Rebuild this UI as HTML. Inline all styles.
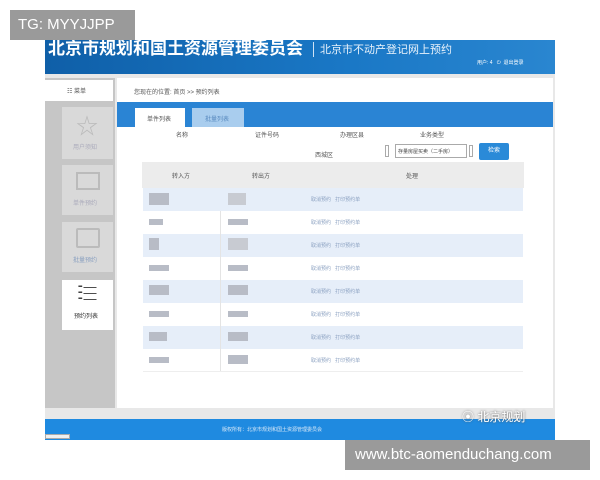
<!DOCTYPE html><html><head><meta charset="utf-8"><style>
*{margin:0;padding:0;box-sizing:border-box}
body{width:600px;height:480px;background:#fff;position:relative;overflow:hidden;font-family:"Liberation Sans","Noto Sans CJK SC",sans-serif}
.a{position:absolute}
.t{font-size:6px;color:#555;white-space:nowrap}
.row{position:absolute;left:143px;width:380px;height:23px}
.blk{position:absolute;background:#b8bcc6;height:6px}
.lk{position:absolute;left:168px;top:8px;font-size:5px;color:#8aa0c0;white-space:nowrap}
</style></head><body>
<div class="a" style="left:45px;top:40px;width:510px;height:400px;background:#e8e8e8"></div>
<div class="a" style="left:45px;top:40px;width:510px;height:34px;background:linear-gradient(90deg,#0f5fa8,#1a78c6 60%,#2a86d0)"></div>
<div class="a" style="left:48px;top:40px;font-size:17px;color:#fff;font-weight:bold;white-space:nowrap;line-height:18px">北京市规划和国土资源管理委员会</div>
<div class="a" style="left:313px;top:42px;width:1px;height:15px;background:#cfe2f5"></div>
<div class="a" style="left:320px;top:41px;font-size:11px;color:#e8f2fb;white-space:nowrap">北京市不动产登记网上预约</div>
<div class="a" style="left:477px;top:59px;font-size:5px;color:#fff;white-space:nowrap">用户: 4 &nbsp;&nbsp;⏻ &nbsp;退出登录</div>
<div class="a" style="left:45px;top:78px;width:70px;height:330px;background:#c6c6c6"></div>
<div class="a" style="left:45px;top:80px;width:68px;height:21px;background:#fff"></div>
<div class="a t" style="left:67px;top:86px;font-size:6px">☷ 菜单</div>
<div class="a" style="left:62px;top:107px;width:51px;height:52px;background:#d9d9d9"></div>
<div class="a" style="left:76px;top:109px;font-size:22px;color:#bbb">☆</div>
<div class="a t" style="left:73px;top:142px;color:#aab">用户须知</div>
<div class="a" style="left:62px;top:165px;width:51px;height:50px;background:#d9d9d9"></div>
<div class="a" style="left:76px;top:172px;width:24px;height:18px;border:2px solid #bbb"></div>
<div class="a t" style="left:73px;top:198px;color:#aab">单件预约</div>
<div class="a" style="left:62px;top:222px;width:51px;height:50px;background:#d9d9d9"></div>
<div class="a" style="left:76px;top:228px;width:24px;height:20px;border:2px solid #bbb;border-radius:2px"></div>
<div class="a t" style="left:73px;top:255px;color:#8aa0c0">批量预约</div>
<div class="a" style="left:62px;top:280px;width:51px;height:50px;background:#fff"></div>
<div class="a" style="left:77px;top:284px;font-size:13px;line-height:6px;color:#333">⁃―<br>⁃―<br>⁃―</div>
<div class="a t" style="left:74px;top:311px;color:#333">预约列表</div>
<div class="a" style="left:117px;top:78px;width:436px;height:330px;background:#fff"></div>
<div class="a t" style="left:134px;top:87px">您现在的位置: 首页 >> 预约列表</div>
<div class="a" style="left:117px;top:102px;width:436px;height:25px;background:#2a84d4"></div>
<div class="a" style="left:135px;top:108px;width:50px;height:19px;background:#fff"></div>
<div class="a t" style="left:147px;top:114px">单件列表</div>
<div class="a" style="left:192px;top:108px;width:52px;height:19px;background:#a9cdee"></div>
<div class="a t" style="left:205px;top:114px;color:#5a8bc0">批量列表</div>
<div class="a t" style="left:176px;top:130px">名称</div>
<div class="a t" style="left:255px;top:130px">证件号码</div>
<div class="a t" style="left:340px;top:130px">办理区县</div>
<div class="a t" style="left:420px;top:130px">业务类型</div>
<div class="a t" style="left:315px;top:150px">西城区</div>
<div class="a" style="left:385px;top:145px;width:4px;height:12px;border:1px solid #aaa"></div>
<div class="a" style="left:395px;top:144px;width:72px;height:14px;border:1px solid #aaa;font-size:5px;color:#444;padding:3px 2px;white-space:nowrap">存量房屋买卖（二手房）</div>
<div class="a" style="left:469px;top:145px;width:4px;height:12px;border:1px solid #aaa"></div>
<div class="a" style="left:479px;top:143px;width:30px;height:17px;background:#2a8ad8;border-radius:2px;font-size:6px;color:#fff;text-align:center;line-height:17px">检索</div>
<div class="a" style="left:142px;top:162px;width:382px;height:26px;background:#ececec"></div>
<div class="a t" style="left:172px;top:171px">转入方</div>
<div class="a t" style="left:252px;top:171px">转出方</div>
<div class="a t" style="left:406px;top:171px">处理</div>
<div class="row" style="top:188px;background:#e6eef9"><div class="blk" style="left:6px;top:5px;width:20px;height:12px"></div><div class="blk" style="left:85px;top:5px;width:18px;height:12px;background:#c8cbd2"></div><div class="lk">取消预约 &nbsp;&nbsp;打印预约单</div></div>
<div class="row" style="top:211px;background:#fff"><div class="blk" style="left:6px;top:8px;width:14px"></div><div class="blk" style="left:85px;top:8px;width:20px"></div><div class="lk">取消预约 &nbsp;&nbsp;打印预约单</div></div>
<div class="row" style="top:234px;background:#e6eef9"><div class="blk" style="left:6px;top:4px;width:10px;height:12px"></div><div class="blk" style="left:85px;top:4px;width:20px;height:12px;background:#c8cbd2"></div><div class="lk">取消预约 &nbsp;&nbsp;打印预约单</div></div>
<div class="row" style="top:257px;background:#fff"><div class="blk" style="left:6px;top:8px;width:20px"></div><div class="blk" style="left:85px;top:8px;width:20px"></div><div class="lk">取消预约 &nbsp;&nbsp;打印预约单</div></div>
<div class="row" style="top:280px;background:#e6eef9"><div class="blk" style="left:6px;top:5px;width:20px;height:10px"></div><div class="blk" style="left:85px;top:5px;width:20px;height:10px"></div><div class="lk">取消预约 &nbsp;&nbsp;打印预约单</div></div>
<div class="row" style="top:303px;background:#fff"><div class="blk" style="left:6px;top:8px;width:20px"></div><div class="blk" style="left:85px;top:8px;width:20px"></div><div class="lk">取消预约 &nbsp;&nbsp;打印预约单</div></div>
<div class="row" style="top:326px;background:#e6eef9"><div class="blk" style="left:6px;top:6px;width:18px;height:9px"></div><div class="blk" style="left:85px;top:6px;width:20px;height:9px"></div><div class="lk">取消预约 &nbsp;&nbsp;打印预约单</div></div>
<div class="row" style="top:349px;background:#fff;border-bottom:1px solid #eee"><div class="blk" style="left:6px;top:8px;width:20px"></div><div class="blk" style="left:85px;top:6px;width:20px;height:9px"></div><div class="lk">取消预约 &nbsp;&nbsp;打印预约单</div></div>
<div class="a" style="left:220px;top:211px;width:1px;height:160px;background:#e4e4e4"></div>
<div class="a" style="left:45px;top:419px;width:510px;height:21px;background:#1f8ae0"></div>
<div class="a" style="left:222px;top:426px;font-size:5px;color:#dbeaf8;white-space:nowrap">版权所有：北京市规划和国土资源管理委员会</div>
<div class="a" style="left:462px;top:408px;font-size:12px;color:#fff;white-space:nowrap;text-shadow:0 0 2px #555">⦿ 北京规划</div>
<div class="a" style="left:45px;top:434px;width:25px;height:5px;background:#f0f0f0;border:1px solid #aaa"></div>
<div class="a" style="left:10px;top:10px;width:125px;height:30px;background:#9a9a9a;color:#fff;font-size:15px;line-height:30px;padding-left:8px">TG: MYYJJPP</div>
<div class="a" style="left:345px;top:440px;width:245px;height:30px;background:#9a9a9a;color:#fff;font-size:15px;line-height:30px;padding-left:10px;white-space:nowrap">www.btc-aomenduchang.com</div>
</body></html>
